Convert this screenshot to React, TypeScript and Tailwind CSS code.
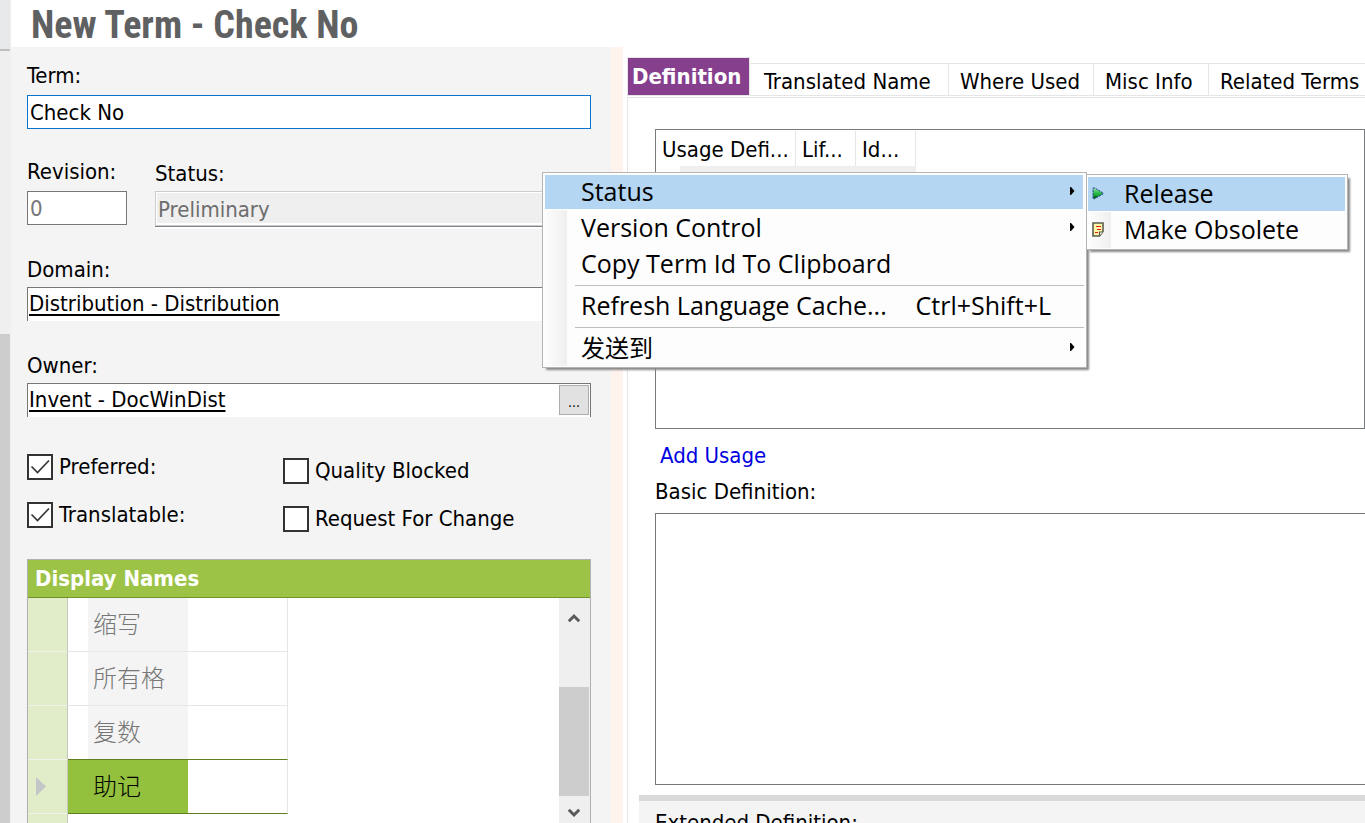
import React from 'react';

const usageColumns = [
  { title: 'Usage Defi...', width: 'w-[140px]' },
  { title: 'Lif...', width: 'w-[60px]' },
  { title: 'Id...', width: 'w-[60px]' },
];

const tabs = [
  { title: 'Translated Name', width: 'w-[199px] pl-3.5' },
  { title: 'Where Used', width: 'w-[145px] pl-[11px]' },
  { title: 'Misc Info', width: 'w-[115px] pl-[11px]' },
  { title: 'Related Terms', width: 'w-[185px] pl-[11px]' },
];

const displayNames = ['缩写', '所有格', '复数', '助记'];

function Label({ htmlFor, children }: { htmlFor: string; children: React.ReactNode }) {
  return (
    <label htmlFor={htmlFor} className="block leading-[30px]">
      {children}
    </label>
  );
}

function CheckField({ id, label, checked = false }: { id: string; label: string; checked?: boolean }) {
  return (
    <div className="flex h-[26px] items-center gap-1.5">
      <span className="grid size-[26px] shrink-0">
        <input
          id={id}
          type="checkbox"
          defaultChecked={checked}
          className="peer col-start-1 row-start-1 size-[26px] appearance-none border-2 border-[#333] bg-white"
        />
        <svg
          viewBox="0 0 26 26"
          className="pointer-events-none invisible col-start-1 row-start-1 size-[26px] peer-checked:visible"
          fill="none"
          stroke="#333"
          strokeWidth="1.6"
        >
          <path d="M4.5 12.5 10.5 18.5 22 6.5" />
        </svg>
      </span>
      <label htmlFor={id} className="whitespace-nowrap leading-7">
        {label}
      </label>
    </div>
  );
}

function SubmenuArrow() {
  return (
    <svg viewBox="0 0 5 8" className="ml-auto h-2 w-[5px]" fill="#000">
      <path d="M0 0h1l3.5 4L1 8H0z" />
    </svg>
  );
}

function Chevron({ down = false }: { down?: boolean }) {
  return (
    <svg viewBox="0 0 12 10" className="h-[10px] w-3" fill="none" stroke="#5a5a5a" strokeWidth="3">
      <path d={down ? 'M0.8 1.8 6 7l5.2-5.2' : 'M0.8 8.2 6 3l5.2 5.2'} />
    </svg>
  );
}

function MenuItem({
  children,
  active = false,
  arrow = false,
  shortcut,
}: {
  children: React.ReactNode;
  active?: boolean;
  arrow?: boolean;
  shortcut?: string;
}) {
  return (
    <li role="none" className="flex h-9 py-px pl-px pr-[3px]">
      <button
        type="button"
        role="menuitem"
        className={`flex flex-1 items-center whitespace-nowrap pb-0.5 pl-9 pr-2 text-left ${active ? 'bg-[#b4d6f2]' : ''}`}
      >
        {children}
        {shortcut && <span className="ml-auto pr-6">{shortcut}</span>}
        {arrow && <SubmenuArrow />}
      </button>
    </li>
  );
}

function MenuSeparator() {
  return <li role="separator" className="mb-0.5 ml-[31px] mr-0.5 mt-[3px] h-px bg-[#bdbdbd]" />;
}

function PlayIcon() {
  return (
    <svg viewBox="0 0 12 13" className="h-[13px] w-3">
      <defs>
        <linearGradient id="play" x1="0" y1="0" x2="0" y2="1">
          <stop offset="0" stopColor="#9fe0a8" />
          <stop offset="0.45" stopColor="#2fbf4a" />
          <stop offset="1" stopColor="#087a20" />
        </linearGradient>
      </defs>
      <path d="M1 1.2 2.5.8 11 6 11 7 2.5 11.8 1 11.5z" fill="url(#play)" stroke="#1c3c9c" strokeWidth="1" strokeDasharray="2 1" />
      <path d="M2 9h4L3 11H2z" fill="#05691a" />
    </svg>
  );
}

function NoteIcon() {
  return (
    <svg viewBox="0 0 12 15" className="h-[15px] w-3">
      <path d="M1 1h10v8.5L7.5 14H1z" fill="#fdf8a6" stroke="#5c5c50" strokeWidth="1.6" />
      <path d="M7.5 13.5V10H11" fill="#fffde0" stroke="#5c5c50" strokeWidth="1.2" />
      <path d="M4 4.5h5M5 7.5h4M3 10.5h3" stroke="#ec1c1c" strokeWidth="1.2" />
    </svg>
  );
}

function TermForm() {
  return (
    <section className="flex w-[600px] shrink-0 flex-col bg-[#f4f4f4] pl-4 pr-5 pt-3.5">
      <div className="h-24 shrink-0">
        <Label htmlFor="term">Term:</Label>
        <input id="term" defaultValue="Check No" className="mt-1 block h-[34px] w-full border border-[#0a74cc] bg-white px-0.5 outline-none" />
      </div>
      <div className="flex h-24 shrink-0 gap-7">
        <div className="w-[100px]">
          <Label htmlFor="revision">Revision:</Label>
          <input id="revision" disabled defaultValue="0" className="mt-1 block h-[34px] w-full border border-[#777] bg-white px-0.5 text-[#777]" />
        </div>
        <div className="flex-1 pt-0.5">
          <Label htmlFor="status">Status:</Label>
          <div className="mt-0.5 h-[38px] border-b-2 border-white">
            <div className="border-b border-[#7f858c]">
              <div className="border border-[#ccc] bg-white px-px pb-0.5 pt-px">
                <select id="status" disabled className="block h-[30px] w-full appearance-none bg-[#efefef] px-px text-[#6d6d6d]">
                  <option>Preliminary</option>
                </select>
              </div>
            </div>
          </div>
        </div>
      </div>
      <div className="h-24 shrink-0 pt-0.5">
        <Label htmlFor="domain">Domain:</Label>
        <div className="mt-0.5 h-[34px] border-x border-t border-[#777] bg-white">
          <input
            id="domain"
            defaultValue="Distribution - Distribution"
            className="block h-[31px] w-full px-px underline underline-offset-3 outline-none"
          />
        </div>
      </div>
      <div className="h-24 shrink-0 pt-0.5">
        <Label htmlFor="owner">Owner:</Label>
        <div className="mt-0.5 flex h-[34px] border-x border-t border-[#777] bg-white pr-px">
          <input id="owner" defaultValue="Invent - DocWinDist" className="h-[31px] min-w-0 flex-1 px-px underline underline-offset-3 outline-none" />
          <button type="button" aria-label="Browse owners" className="mt-px flex h-[30px] w-[30px] items-center justify-center border border-[#adadad] bg-[#e1e1e1] pt-1 text-sm leading-none">
            ...
          </button>
        </div>
      </div>
      <div className="flex h-[114px] shrink-0">
        <div className="flex w-64 flex-col gap-[22px] pt-[9px]">
          <CheckField id="preferred" label="Preferred:" checked />
          <CheckField id="translatable" label="Translatable:" checked />
        </div>
        <div className="flex flex-col gap-[22px] pt-[13px]">
          <CheckField id="blocked" label="Quality Blocked" />
          <CheckField id="change" label="Request For Change" />
        </div>
      </div>
      <div className="flex min-h-0 flex-1 flex-col border-x border-t border-[#b0b0b0] bg-white">
        <h2 className="h-[38px] shrink-0 border-b border-[#6f922a] bg-[#9cc346] pl-[7px] font-bold leading-[38px] text-white">Display Names</h2>
        <div className="flex min-h-0 flex-1">
          <div className="flex-1 overflow-hidden">
            <table className="table-fixed border-separate border-spacing-0">
              <tbody className="font-['Noto_Sans_CJK_SC',sans-serif] text-2xl font-light text-[#777]">
                {displayNames.map((name, index) => {
                  const current = index === displayNames.length - 1;
                  const line = index >= displayNames.length - 2 ? 'border-b border-b-[#5f7f1c]' : 'border-b border-b-[#e6e6e6]';
                  return (
                    <tr key={name} className="h-[54px]">
                      <td className="w-10 border-b border-r border-b-[#f0f2ea] border-r-[#c4c8bc] bg-[#e0edc8] p-0 pl-2">
                        {current && (
                          <svg viewBox="0 0 10 19" className="h-[19px] w-[10px]" fill="#c3c6c6">
                            <path d="M0 0 10 9.5 0 19z" />
                          </svg>
                        )}
                      </td>
                      <td className={`w-5 p-0 ${line} ${current ? 'bg-[#94c13d]' : ''}`} />
                      <td className={`w-[100px] p-0 pb-1 pl-[5px] leading-8 ${line} ${current ? 'bg-[#94c13d] text-black' : 'bg-[#f4f4f4]'}`}>{name}</td>
                      <td className={`w-[100px] border-r border-r-[#e6e6e6] p-0 ${line}`} />
                    </tr>
                  );
                })}
                <tr className="h-[54px]">
                  <td className="border-r border-r-[#c4c8bc] bg-[#e0edc8]" />
                  <td colSpan={3} />
                </tr>
              </tbody>
            </table>
          </div>
          <div className="flex w-[31px] flex-col bg-[#efefef] pr-px">
            <button type="button" aria-label="Scroll up" className="flex h-[39px] items-center justify-center">
              <Chevron />
            </button>
            <div className="flex-1 pt-[50px]">
              <div className="h-[109px] bg-[#cdcdcd]" />
            </div>
            <button type="button" aria-label="Scroll down" className="flex h-5 items-center justify-center">
              <Chevron down />
            </button>
          </div>
        </div>
      </div>
    </section>
  );
}

function DefinitionPanel() {
  return (
    <section className="flex min-w-0 flex-1 flex-col overflow-hidden bg-white pl-1 pt-2.5">
      <div role="tablist" className="flex h-10 shrink-0 items-end">
        <button type="button" role="tab" aria-selected="true" className="mb-px h-[39px] w-[123px] shrink-0 border border-[#e6e6e6] bg-[#853f8d] pl-1 text-left font-bold leading-[38px] text-white">
          Definition
        </button>
        {tabs.map((tab) => (
          <button
            key={tab.title}
            type="button"
            role="tab"
            aria-selected="false"
            className={`mb-px h-[33px] shrink-0 whitespace-nowrap border-y border-r border-[#e6e6e6] pt-0.5 text-left leading-8 ${tab.width}`}
          >
            {tab.title}
          </button>
        ))}
      </div>
      <div className="flex min-h-0 flex-1 flex-col border-l border-t border-[#e6e6e6] pt-[31px]">
        <div className="ml-[27px] h-[300px] shrink-0 border border-[#777b80] pt-px">
          <table className="border-separate border-spacing-0">
            <thead>
              <tr className="h-[35px]">
                {usageColumns.map((column) => (
                  <th key={column.title} className={`whitespace-nowrap border-r border-[#e6e6e6] p-0 pl-1.5 pt-px text-left font-normal ${column.width}`}>
                    {column.title}
                  </th>
                ))}
              </tr>
            </thead>
            <tbody>
              <tr className="h-9">
                <td colSpan={3} className="p-0 pl-6">
                  <div className="h-9 bg-[#efefef]" />
                </td>
              </tr>
            </tbody>
          </table>
        </div>
        <a href="#usage" className="ml-8 mt-[13px] self-start leading-7 text-[#0000e0]">
          Add Usage
        </a>
        <label htmlFor="basic" className="ml-[27px] mt-2 self-start leading-7">
          Basic Definition:
        </label>
        <textarea id="basic" className="ml-[27px] mt-[7px] block h-[272px] shrink-0 resize-none border-y border-l border-[#777] bg-white outline-none" />
        <div className="ml-[11px] mt-2.5 min-h-0 flex-1 overflow-hidden border-t-[6px] border-[#dadada] bg-[#f4f4f4] pl-4 pt-2">
          <label htmlFor="extended" className="block leading-7">
            Extended Definition:
          </label>
          <textarea id="extended" className="block h-24 w-full resize-none border border-[#777] bg-white" />
        </div>
      </div>
    </section>
  );
}

function ContextMenus() {
  return (
    <div className="absolute left-[542px] top-[172px] flex items-start font-['Open_Sans','Noto_Sans_CJK_SC',sans-serif] text-[25px] leading-8">
      <ul role="menu" className="w-[545px] border border-[#b4b4b4] bg-[#fdfdfd] bg-[linear-gradient(to_right,#fdfdfd,#efefef)] bg-[length:22px_156px] bg-[position:2px_37px] bg-no-repeat py-px pl-px shadow-[3px_3px_2px_-1px_#888]">
        <MenuItem active arrow>
          Status
        </MenuItem>
        <MenuItem arrow>Version Control</MenuItem>
        <MenuItem>Copy Term Id To Clipboard</MenuItem>
        <MenuSeparator />
        <MenuItem shortcut="Ctrl+Shift+L">Refresh Language Cache...</MenuItem>
        <MenuSeparator />
        <MenuItem arrow>
          <span className="pt-0.5 text-2xl leading-8">发送到</span>
        </MenuItem>
      </ul>
      <ul role="menu" className="-ml-px mt-0.5 w-[262px] border border-[#b4b4b4] bg-[#fdfdfd] bg-[linear-gradient(to_right,#fdfdfd,#efefef)] bg-[length:22px_36px] bg-[position:2px_37px] bg-no-repeat py-px shadow-[3px_3px_2px_-1px_#888]">
        <li role="none" className="flex h-9 py-px pl-px pr-0.5">
          <button type="button" role="menuitem" className="flex flex-1 items-center gap-5 bg-[#b4d6f2] pb-0.5 pl-1 text-left">
            <PlayIcon />
            Release
          </button>
        </li>
        <li role="none" className="flex h-9 py-px pl-px pr-0.5">
          <button type="button" role="menuitem" className="flex flex-1 items-center gap-5 whitespace-nowrap pb-0.5 pl-1 text-left">
            <NoteIcon />
            Make Obsolete
          </button>
        </li>
      </ul>
    </div>
  );
}

export default function App() {
  return (
    <div className="relative flex h-screen overflow-hidden bg-white font-['DejaVu_Sans_Condensed','Noto_Sans_CJK_SC',sans-serif] text-[22px] text-black">
      <div className="flex w-[11px] shrink-0 flex-col bg-[#efefef] pr-px">
        <div className="h-[51px] shrink-0 border-b-2 border-[#bcbec0] bg-[#e8e9ea]" />
        <div className="mt-[283px] flex-1 bg-[#cdcdcd]" />
      </div>
      <div className="flex min-w-0 flex-1 flex-col">
        <header className="h-[47px] shrink-0 pl-5">
          <h1 className="font-['Roboto_Condensed','Roboto',sans-serif] text-[38px] font-bold leading-[50px] text-[#5f6062]">New Term - Check No</h1>
        </header>
        <main className="flex min-h-0 flex-1">
          <TermForm />
          <div className="w-3 shrink-0 bg-[#fff3ed]" />
          <DefinitionPanel />
        </main>
      </div>
      <ContextMenus />
    </div>
  );
}
